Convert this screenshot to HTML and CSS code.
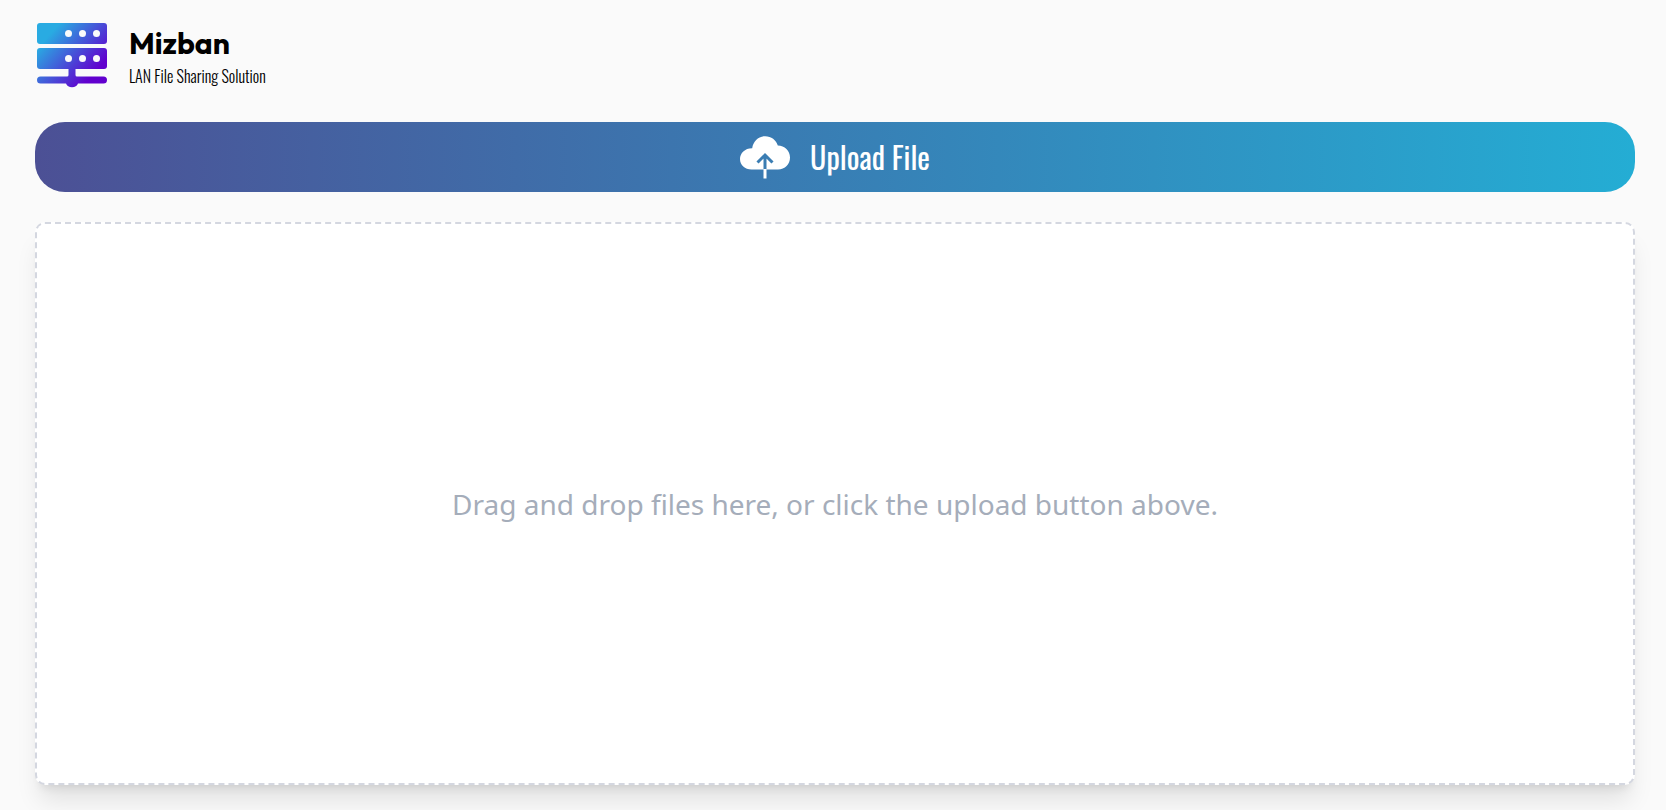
FILE: index.html
```html
<!DOCTYPE html>
<html lang="en">
<head>
<meta charset="utf-8">
<meta name="viewport" content="width=device-width, initial-scale=1">
<title>Mizban</title>
<link rel="stylesheet" href="styles.css">
</head>
<body>
<header class="brand">
  <svg class="logo" viewBox="0 0 70 65" aria-hidden="true">
    <defs>
      <linearGradient id="brand-fill" gradientUnits="userSpaceOnUse" x1="15" y1="9" x2="59" y2="48">
        <stop offset="0" stop-color="#29abe2"/>
        <stop offset="1" stop-color="#6100ce"/>
      </linearGradient>
    </defs>
    <g fill="url(#brand-fill)">
      <rect width="70" height="21" rx="3"/>
      <rect y="25" width="70" height="21" rx="3"/>
      <path d="M3.500 53.500H30q1.500 0 1.500-1.500V46h7v6q0 1.500 1.500 1.500h26.500a3.500 3.500 0 0 1 0 7H41a6.400 5.800 0 0 1-12 0H3.500a3.500 3.500 0 0 1 0-7z"/>
    </g>
    <g fill="#fafafa">
      <circle cx="31.500" cy="10.500" r="3.500"/><circle cx="45.500" cy="10.500" r="3.500"/><circle cx="59.500" cy="10.500" r="3.500"/>
      <circle cx="31.500" cy="35.500" r="3.500"/><circle cx="45.500" cy="35.500" r="3.500"/><circle cx="59.500" cy="35.500" r="3.500"/>
    </g>
  </svg>
  <div class="brand-text">
    <h1 class="name">Mizban</h1>
    <p class="tagline">LAN File Sharing Solution</p>
  </div>
</header>
<main class="content">
  <button class="upload" type="button">
    <svg class="cloud" viewBox="0 0 50 44" aria-hidden="true">
      <path fill="#fff" d="M11.500 34.500C5 34.500 0 29.900 0 24s5-10.900 12.200-10.800C13.200 6.300 18.500 1.200 25.200 1.200c6 0 11 3.800 12.600 9.300C44.600 10.700 50 15.700 50 22.500s-5 12-12 12z"/>
      <path fill="none" stroke="#3a7db3" stroke-width="3" d="M25 34.500V21M17.500 27.500 25 20l7.500 7.500"/>
      <path fill="#fff" d="M23.500 34h3v9.500h-3z"/>
    </svg>
    <span>Upload File</span>
  </button>
  <section class="dropzone">
    <p class="hint">Drag and drop files here, or click the upload button above.</p>
  </section>
</main>
</body>
</html>
```
FILE: styles.css
```css
* {
  box-sizing: border-box;
}

body {
  display: flex;
  flex-direction: column;
  gap: 33px;
  min-height: 100vh;
  margin: 0;
  padding: 23px 31px 25px 35px;
  background: #fafafa;
  font-family: "Noto Sans", "Open Sans", sans-serif;
}

.brand {
  display: flex;
  align-items: flex-start;
  gap: 22px;
  padding-left: 2px;
}

.logo {
  width: 70px;
  height: 65px;
}

.name {
  margin: 0;
  font: 700 30px/40px Outfit, Inter, sans-serif;
  color: #000;
}

.tagline {
  margin: 0;
  font: 300 16px/26px Oswald, "Roboto Condensed", Roboto, sans-serif;
  color: #000;
}

.content {
  display: flex;
  flex: 1;
  flex-direction: column;
  gap: 30px;
}

.upload {
  display: flex;
  align-items: center;
  justify-content: center;
  gap: 20px;
  height: 70px;
  padding: 0;
  border: 0;
  border-radius: 30px;
  background: linear-gradient(90deg, #4c5095, #24add4);
  font: 400 30px/40px Oswald, "Roboto Condensed", Roboto, sans-serif;
  color: #fff;
  cursor: pointer;
}

.cloud {
  width: 50px;
  height: 44px;
}

.dropzone {
  display: flex;
  flex: 1;
  align-items: center;
  justify-content: center;
  border: 2px dashed #d4d7e0;
  border-radius: 10px;
  background: #fff;
  box-shadow: 0 20px 25px -5px rgba(0, 0, 0, 0.1), 0 8px 10px -6px rgba(0, 0, 0, 0.1);
}

.hint {
  margin: 0;
  font-size: 28px;
  line-height: 40px;
  color: #a5adba;
}
```
